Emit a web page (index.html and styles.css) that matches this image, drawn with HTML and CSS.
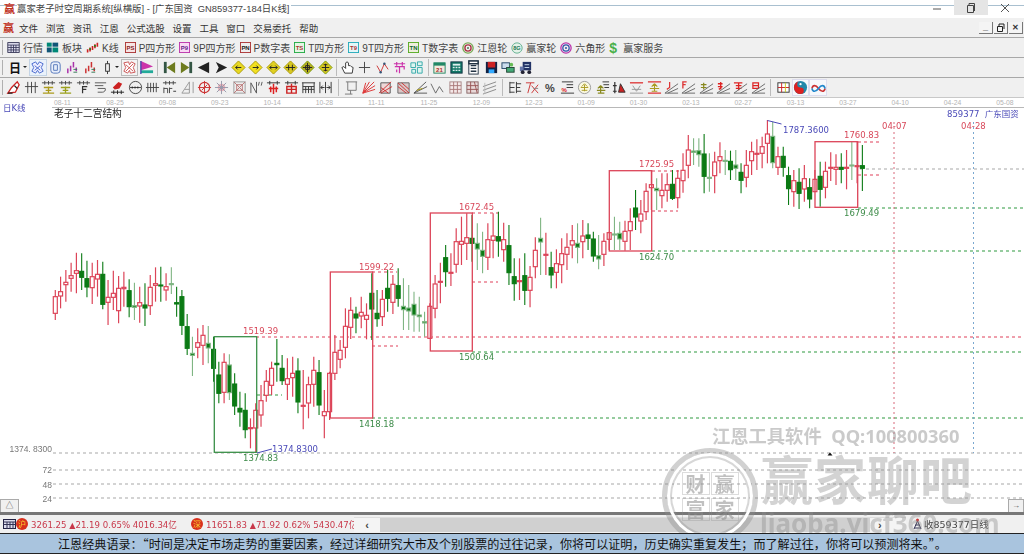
FILE: index.html
```html
<!DOCTYPE html>
<html lang="zh-CN">
<head>
  <meta charset="UTF-8">
  <title>赢家老子时空周期系统</title>
  <link rel="stylesheet" href="styles.css">
</head>
<body>
  <div class="app">
    <div class="titlebar">
      <span class="logo">赢</span>
      <span class="title-text">赢家老子时空周期系统[纵横版] - [广东国资&nbsp; GN859377-184日K线]</span>
      <div class="win-btns">
        <span class="win-btn"><svg width="10" height="10"><path d="M1 6h8" stroke="#555"/></svg></span>
        <span class="win-btn on"><svg width="10" height="12"><path d="M1.5 3.5h6v7h-6zM3 3V1.5h5.5V9" fill="none" stroke="#444"/></svg></span>
        <span class="win-btn"><svg width="10" height="10"><path d="M1 1l8 8M9 1l-8 8" stroke="#555"/></svg></span>
      </div>
    </div>

    <div class="menubar">
      <span class="logo">赢</span>
      <span class="menu">文件</span><span class="menu">浏览</span><span class="menu">资讯</span><span class="menu">江恩</span><span class="menu">公式选股</span><span class="menu">设置</span><span class="menu">工具</span><span class="menu">窗口</span><span class="menu">交易委托</span><span class="menu">帮助</span>
      <div class="mdi-btns">
        <span class="mdi-btn">_</span><span class="mdi-btn"><svg width="9" height="9"><path d="M1.5 3.5h5v5h-5zM3 3V1h5v5" fill="none" stroke="#222"/></svg></span><span class="mdi-btn close">✕</span>
      </div>
    </div>

    <div class="toolbar tb-main">
      <span class="tb-item"><svg class="ico" viewBox="0 0 16 14"><rect x="1" y="1" width="14" height="12" fill="#dde" stroke="#224"/><path d="M1 4h14M1 7h14M1 10h14M5 4v9M8 4v9M11 4v9" stroke="#335"/></svg>行情</span>
      <span class="tb-item"><svg class="ico" viewBox="0 0 16 14"><rect x="1" y="1" width="6" height="5" fill="#087"/><rect x="8" y="1" width="7" height="5" fill="#157"/><rect x="1" y="7" width="6" height="6" fill="#157"/><rect x="8" y="7" width="7" height="6" fill="#087"/></svg>板块</span>
      <span class="tb-item kline"><svg class="ico" viewBox="0 0 16 14"><path d="M2 9v4M5 7v5M8 5v5M11 3v5M14 1v5" stroke="#c22" stroke-width="2"/><path d="M5 8v2M11 4v2" stroke="#181" stroke-width="2"/></svg>K线</span>
      <span class="tb-item"><svg class="ico box-ico" viewBox="0 0 12 12"><rect x=".5" y=".5" width="11" height="11" fill="#f6e4e4" stroke="#a33"/><text x="6" y="8.5" class="ico-txt" fill="#822">PS</text></svg>P四方形</span>
      <span class="tb-item"><svg class="ico box-ico" viewBox="0 0 12 12"><rect x=".5" y=".5" width="11" height="11" fill="#f8d8f4" stroke="#b3a"/><text x="6" y="8.5" class="ico-txt" fill="#628">P9</text></svg>9P四方形</span>
      <span class="tb-item"><svg class="ico box-ico" viewBox="0 0 12 12"><rect x=".5" y=".5" width="11" height="11" fill="#eee" stroke="#a33"/><text x="6" y="8.5" class="ico-txt" fill="#222">PN</text></svg>P数字表</span>
      <span class="tb-item"><svg class="ico box-ico" viewBox="0 0 12 12"><rect x=".5" y=".5" width="11" height="11" fill="#e4f6e4" stroke="#2a4"/><text x="6" y="8.5" class="ico-txt" fill="#a33">TS</text></svg>T四方形</span>
      <span class="tb-item"><svg class="ico box-ico" viewBox="0 0 12 12"><rect x=".5" y=".5" width="11" height="11" fill="#e4f6f8" stroke="#2ab"/><text x="6" y="8.5" class="ico-txt" fill="#a33">T9</text></svg>9T四方形</span>
      <span class="tb-item"><svg class="ico box-ico" viewBox="0 0 12 12"><rect x=".5" y=".5" width="11" height="11" fill="#eed" stroke="#5a2"/><text x="6" y="8.5" class="ico-txt" fill="#163">TN</text></svg>T数字表</span>
      <span class="tb-item"><svg class="ico round" viewBox="0 0 14 14"><circle cx="7" cy="7" r="6" fill="none" stroke="#7a5" stroke-width="1.6"/><circle cx="7" cy="7" r="3.6" fill="none" stroke="#a34" stroke-width="1.6"/><circle cx="7" cy="7" r="1.2" fill="#575"/></svg>江恩轮</span>
      <span class="tb-item"><svg class="ico round" viewBox="0 0 14 14"><circle cx="7" cy="7" r="6" fill="#e4f2e8" stroke="#5a8"/><text x="7" y="9.5" class="ico-txt" fill="#275">8G</text></svg>赢家轮</span>
      <span class="tb-item"><svg class="ico round" viewBox="0 0 14 14"><circle cx="7" cy="7" r="6" fill="none" stroke="#b3a" stroke-width="1.5"/><circle cx="7" cy="7" r="3.7" fill="none" stroke="#35a" stroke-width="1.5"/><circle cx="7" cy="7" r="1.2" fill="#35a"/></svg>六角形</span>
      <span class="tb-item"><span class="dollar">$</span>赢家服务</span>
    </div>

    <div class="toolbar tb-icons">
      <span class="tool wide day-btn"><b class="day">日</b><i class="caret"></i></span>
      <span class="tool on"><svg viewBox="0 0 16 16"><path d="M2 4l4-2 2 3 2-3 4 2-2 4 2 4-4 2-2-3-2 3-4-2 2-4z" fill="#eef" stroke="#46c"/><path d="M5 6l6 5M11 6l-6 5" stroke="#46c"/></svg></span>
      <span class="tool"><svg viewBox="0 0 16 16"><rect x="3" y="2" width="10" height="12" rx="3" fill="#e8eefa" stroke="#57b"/><path d="M6 5h4v6H6z" fill="none" stroke="#57b"/></svg></span>
      <span class="tool"><svg viewBox="0 0 16 16"><path d="M3 9v5M6 6v6M9 2v6M12 8v4" stroke="#a3a" stroke-width="1.6"/><path d="M9 10h4M9 13h4" stroke="#375"/></svg></span>
      <span class="tool"><svg viewBox="0 0 16 16"><path d="M3 9v5M6 6v6M9 2v6M12 8v4" stroke="#c33" stroke-width="1.6"/><path d="M9 10h4M9 13h4" stroke="#375"/></svg></span>
      <span class="tool wide"><svg viewBox="0 0 16 16"><rect x="6" y="4" width="4" height="8" fill="none" stroke="#333"/><path d="M8 1v3M8 12v3" stroke="#333"/></svg><i class="caret"></i></span>
      <span class="tool on gray"><svg viewBox="0 0 16 16"><path d="M2 3l5-1 1 3 2-3 4 2-2 4 2 5-5 1-1-3-2 3-4-2 2-4z" fill="#fff" stroke="#c55"/><path d="M4 5l8 7M12 4l-8 8" stroke="#c55"/></svg></span>
      <span class="tool"><svg viewBox="0 0 16 16"><path d="M2 1l13 6-13 4z" fill="#c3a"/><path d="M2 11h13v3H2z" fill="#2a9"/><path d="M2 1v14" stroke="#44a" stroke-width="1.4"/></svg></span>
      <span class="sep"></span>
      <span class="tool"><svg viewBox="0 0 16 16"><path d="M2 2h3v12H2z" fill="#354"/><path d="M14 2v12L5 8z" fill="#6d7b1e"/></svg></span>
      <span class="tool"><svg viewBox="0 0 16 16"><path d="M11 2h3v12h-3z" fill="#354"/><path d="M2 2v12l9-6z" fill="#6d7b1e"/></svg></span>
      <span class="tool"><svg viewBox="0 0 16 16"><path d="M14 2v12L2 8z" fill="#222"/></svg></span>
      <span class="tool"><svg viewBox="0 0 16 16"><path d="M2 2l12 6-12 6 3-6z" fill="#222"/></svg></span>
      <span class="tool"><svg viewBox="0 0 16 16"><path d="M8 1l7 7-7 7-7-7z" fill="#e8d820" stroke="#a90"/><path d="M5 8h6M7 6L5 8l2 2" fill="none" stroke="#222"/></svg></span>
      <span class="tool"><svg viewBox="0 0 16 16"><path d="M8 1l7 7-7 7-7-7z" fill="#f2e020" stroke="#a90"/><path d="M5 8h6M9 6l2 2-2 2" fill="none" stroke="#222"/></svg></span>
      <span class="tool"><svg viewBox="0 0 16 16"><path d="M8 1l7 7-7 7-7-7z" fill="#e0d020" stroke="#a90"/><path d="M4 8h8M6 6L4 8l2 2M10 6l2 2-2 2" fill="none" stroke="#222"/></svg></span>
      <span class="tool"><svg viewBox="0 0 16 16"><path d="M8 1l7 7-7 7-7-7z" fill="#d8c820" stroke="#a90"/><path d="M3 8h10M6 5v6M10 5v6" fill="none" stroke="#222"/></svg></span>
      <span class="tool"><svg viewBox="0 0 16 16"><path d="M8 1l7 7-7 7-7-7z" fill="#b8b020" stroke="#790"/><path d="M3 8h10M8 3v10M6 6h4v4H6z" fill="none" stroke="#222"/></svg></span>
      <span class="tool"><svg viewBox="0 0 16 16"><path d="M8 1l7 7-7 7-7-7z" fill="#d8c820" stroke="#790"/><path d="M4 8h8M8 4v8M6 5h4M6 11h4" fill="none" stroke="#222"/></svg></span>
      <span class="sep"></span>
      <span class="tool"><svg viewBox="0 0 16 16"><path d="M5 14L2 8l2-1 2 2V3l1.5-1L9 3v3l2 0 1 1 2 1-1 6z" fill="#fff" stroke="#333"/></svg></span>
      <span class="tool"><svg viewBox="0 0 16 16"><path d="M8 2v12M2 8h12" stroke="#444"/></svg></span>
      <span class="tool"><svg viewBox="0 0 16 16"><path d="M2 6l4 7 4-9 4 6" fill="none" stroke="#c33"/><circle cx="6" cy="13" r="1.3" fill="#357"/><circle cx="10" cy="4" r="1.3" fill="#357"/></svg></span>
      <span class="tool"><svg viewBox="0 0 16 16"><path d="M2 4h12M5 2v4M11 2v4M3 7h10v3M8 7v7M5 10v3" fill="none" stroke="#c3a" stroke-width="1.3"/></svg></span>
      <span class="tool"><svg viewBox="0 0 16 16"><path d="M2 3h5v5H2zM9 2h5v4H9zM3 10h4v4H3zM9 8h5v6H9z" fill="#dff4f0" stroke="#3aa"/></svg></span>
      <span class="sep"></span>
      <span class="tool"><svg viewBox="0 0 16 16"><rect x="2" y="3" width="12" height="11" fill="#f4e8dc" stroke="#286"/><path d="M2 3h12v3H2z" fill="#286"/><text x="8" y="13" class="ico-txt" fill="#a33">21</text></svg></span>
      <span class="tool"><svg viewBox="0 0 16 16"><rect x="2" y="2" width="12" height="12" fill="#176" stroke="#134"/><path d="M4 4h8v2H4z" fill="#dee"/><path d="M4 8h2M7 8h2M10 8h2M4 11h2M7 11h2M10 11h2" stroke="#dee" stroke-width="1.4"/></svg></span>
      <span class="tool"><svg viewBox="0 0 16 16"><rect x="3" y="1" width="10" height="14" fill="#fff" stroke="#234"/><path d="M3 1h10v3H3zM5 6h6M5 9h6M5 12h6" fill="none" stroke="#234" stroke-width="1.4"/></svg></span>
      <span class="tool"><svg viewBox="0 0 16 16"><rect x="2" y="2" width="12" height="12" fill="#124"/><path d="M4 2h8v6H4z" fill="#c22"/><path d="M5 10h6v4H5z" fill="#3af"/></svg></span>
      <span class="tool"><svg viewBox="0 0 16 16"><rect x="1" y="3" width="8" height="6" fill="#cde" stroke="#246"/><rect x="6" y="8" width="8" height="5" fill="#4a7" stroke="#243"/><circle cx="11" cy="5" r="2" fill="#6b5"/></svg></span>
      <span class="tool"><svg viewBox="0 0 16 16"><path d="M5 2h9v9H5z" fill="#236"/><path d="M2 7h4v5H2z" fill="#67a"/><circle cx="5" cy="13" r="2" fill="#223"/><circle cx="12" cy="13" r="2" fill="#223"/><path d="M7 5h5M7 8h5" stroke="#cde"/></svg></span>
    </div>

    <div class="toolbar tb-icons">
      <span class="tool"><svg viewBox="0 0 16 16"><path d="M2 14l4-6 6-6 2 3-4 8z" fill="#fff" stroke="#c22" stroke-width="1.4"/><path d="M2 14h5M9 6l3 3" stroke="#222" stroke-width="1.4"/></svg></span>
      <span class="tool"><svg viewBox="0 0 16 16"><path d="M4 2v12M8 2v12M12 2v12M1 7h14" stroke="#444"/></svg></span>
      <span class="tool"><svg viewBox="0 0 16 16"><path d="M1 3h14M4 1v4M8 1v4M12 1v4" stroke="#444"/><path d="M3 8h10M5 11h6M2 14h12M8 7v7" stroke="#ab9a1c" stroke-width="1.4"/></svg></span>
      <span class="tool"><svg viewBox="0 0 16 16"><path d="M1 3h14M4 1v4M8 1v4M12 1v4" stroke="#444"/><path d="M3 8h10M5 11h6M2 14h12M8 7v7" stroke="#9aa01c" stroke-width="1.4"/></svg></span>
      <span class="tool"><svg viewBox="0 0 16 16"><path d="M1 3h14M4 1v4M8 1v4M12 1v4" stroke="#444"/><path d="M7 14V7h5M7 10h4" fill="none" stroke="#333" stroke-width="1.3"/></svg></span>
      <span class="tool"><svg viewBox="0 0 16 16"><path d="M2 3h12M2 6h9M5 9h8c1 2-1 4-3 4H5" fill="none" stroke="#555"/></svg></span>
      <span class="tool"><svg viewBox="0 0 16 16"><path d="M5 10L3 8l6-6 4 2-3 5z" fill="#c22"/><path d="M1 13h14M4 11v4M8 11v4M12 11v4" stroke="#222"/></svg></span>
      <span class="tool"><svg viewBox="0 0 16 16"><circle cx="8" cy="8" r="6.5" fill="none" stroke="#444"/><path d="M2 8h12" stroke="#444"/><path d="M4 8h1M7 8h1M10 8h1" stroke="#222" stroke-width="2"/></svg></span>
      <span class="tool"><svg viewBox="0 0 16 16"><path d="M3 3v10M6 3v10M9 3v10M12 3v10M1 8h14" stroke="#444"/></svg></span>
      <span class="tool"><svg viewBox="0 0 16 16"><path d="M1 3h14M4 1v4M8 1v4M12 1v4M2 8v6M2 9h4v5M8 8v6M8 9h3" fill="none" stroke="#444"/><path d="M12 12h3" stroke="#333"/></svg></span>
      <span class="tool"><svg viewBox="0 0 16 16"><path d="M2 14L10 2v12zM5 10h5M14 2v12" fill="none" stroke="#999"/></svg></span>
      <span class="tool"><svg viewBox="0 0 16 16"><circle cx="8" cy="8" r="5.5" fill="none" stroke="#c33" stroke-width="1.3"/><path d="M1 8h14M8 1v14M5 11l6-6" stroke="#c33"/></svg></span>
      <span class="tool"><svg viewBox="0 0 16 16"><circle cx="8" cy="8" r="4" fill="#e8b0b8"/><path d="M1 8h14M8 1v14M3 3l10 10M13 3L3 13" stroke="#99a"/></svg></span>
      <span class="tool"><svg viewBox="0 0 16 16"><rect x="2" y="2" width="12" height="12" fill="#eee" stroke="#999"/><path d="M2 2l12 12M14 2L2 14M5 5h6v6H5z" fill="none" stroke="#b77"/></svg></span>
      <span class="tool"><svg viewBox="0 0 16 16"><path d="M2 14V3l6 11V2M11 2l-1 4M14 2l-1 4" fill="none" stroke="#555"/></svg></span>
      <span class="tool"><svg viewBox="0 0 16 16"><path d="M1 3h14M4 1v4M12 1v4" stroke="#333"/><path d="M8 4v11M3 9h10M5 7v6M11 7v6" stroke="#d22" stroke-width="1.6"/></svg></span>
      <span class="tool"><svg viewBox="0 0 16 16"><path d="M1 3h14M4 1v4M12 1v4" stroke="#333"/><path d="M3 7h10v7H3zM3 10h10M8 4v10" fill="none" stroke="#c22" stroke-width="1.5"/></svg></span>
      <span class="tool"><svg viewBox="0 0 16 16"><path d="M1 3h14M2 3v11M14 3v11M2 7h12M2 10h12M5 7v7M8 7v7M11 7v7" stroke="#333"/></svg></span>
      <span class="tool"><svg viewBox="0 0 16 16"><path d="M2 2v12M14 2v12M8 2v12M3 8h4M9 8h4M5 6L3 8l2 2M11 6l2 2-2 2" fill="none" stroke="#333"/></svg></span>
      <span class="sep wide"></span>
      <span class="tool"><svg viewBox="0 0 16 16"><path d="M2 2h12M4 2v9h9V2M7 11v4M1 15h8" fill="none" stroke="#777"/></svg></span>
      <span class="tool"><svg viewBox="0 0 16 16"><path d="M2 14L14 2M2 14L15 6M2 14L15 10M2 14L9 2M2 14L5 3" stroke="#d33"/></svg></span>
      <span class="tool"><svg viewBox="0 0 16 16"><path d="M3 3h10v11H3z" fill="#eed8d8" stroke="#555"/><path d="M1 14L14 2M3 14L15 7M3 8l8 6" stroke="#c33"/></svg></span>
      <span class="tool"><svg viewBox="0 0 16 16"><path d="M2 3h12v11H2z" fill="#d8c8c8" stroke="#666"/><path d="M2 3l12 11M2 7l9 7M6 3l8 7" stroke="#c33"/></svg></span>
      <span class="tool"><svg viewBox="0 0 16 16"><path d="M1 14L14 2M1 14L15 7M1 14h14" stroke="#555"/><path d="M4 11l6-2" stroke="#a90"/></svg></span>
      <span class="tool"><svg viewBox="0 0 16 16"><path d="M1 4l5 10 4-7 4 6" fill="none" stroke="#666"/></svg></span>
      <span class="tool"><svg viewBox="0 0 16 16"><rect x="2" y="2" width="12" height="12" fill="#f4e8e8" stroke="#a88"/><path d="M2 6h12M2 10h12M6 2v12M10 2v12" stroke="#a77"/></svg></span>
      <span class="tool"><svg viewBox="0 0 16 16"><rect x="2" y="2" width="12" height="12" fill="#e8d8d8" stroke="#866"/><path d="M2 6h12M2 10h12M6 2v12M10 2l3 12" stroke="#955"/></svg></span>
      <span class="tool"><svg viewBox="0 0 16 16"><path d="M1 7L15 2M1 11L15 6M1 15L15 10" stroke="#888"/><path d="M3 3v12" stroke="#bbb"/></svg></span>
      <span class="sep wide"></span>
      <span class="tool"><svg viewBox="0 0 16 16"><path d="M2 2v12M2 3h5M2 8h5M2 13h5M9 2v12M9 4h5M9 8h4M9 12h5" stroke="#333"/></svg></span>
      <span class="tool"><svg viewBox="0 0 16 16"><path d="M1 3h9M6 3L3 14M7 6l7 8M14 5l-7 9" fill="none" stroke="#c33"/><path d="M9 9h5" stroke="#888"/></svg></span>
      <span class="tool"><b class="pct">%</b></span>
      <span class="tool"><svg viewBox="0 0 16 16"><path d="M2 2h12M7 5h7M7 8h7M1 14h14" stroke="#333"/><text x="4.5" y="12.5" class="ico-txt" fill="#d22">%</text></svg></span>
      <span class="tool"><svg viewBox="0 0 16 16"><circle cx="8" cy="8" r="6.5" fill="#faf8e0" stroke="#999"/><path d="M4 8h8M5 11h6M8 5v7M8 4L5 7M8 4l3 3" stroke="#aa9a20"/></svg></span>
      <span class="tool"><svg viewBox="0 0 16 16"><path d="M8 2h7M9 5h6M10 8h5" stroke="#333"/><path d="M2 11h9M3 14h7M6 7v7M6 6L3 9M6 6l3 3" fill="none" stroke="#8a8a20" stroke-width="1.3"/></svg></span>
      <span class="tool"><svg viewBox="0 0 16 16"><path d="M3 2v12M1 6h4M1 12h4" stroke="#333" stroke-width="1.3"/><path d="M7 13l2-9 5 9z" fill="#c22" stroke="#333"/></svg></span>
      <span class="tool"><svg viewBox="0 0 16 16"><path d="M1 3h14" stroke="#d33" stroke-width="1.4"/><path d="M4 6l4 6 4-6M3 10h10M1 14h14" fill="none" stroke="#999"/></svg></span>
      <span class="tool"><svg viewBox="0 0 16 16"><path d="M1 2h14M1 14h14" stroke="#d33" stroke-width="1.4"/><path d="M3 9h10M5 12h6M8 5v7M8 4L5 7M8 4l3 3" fill="none" stroke="#aa9a20" stroke-width="1.2"/></svg></span>
      <span class="tool"><svg viewBox="0 0 16 16"><path d="M6 2v6l-3 2" fill="none" stroke="#d33" stroke-width="1.3"/><path d="M1 14L15 4M1 14h14M4 14L15 9" stroke="#666"/></svg></span>
      <span class="tool"><svg viewBox="0 0 16 16"><path d="M2 9V2h4M2 5h3" fill="none" stroke="#d33" stroke-width="1.4"/><path d="M1 14L15 4M1 14h14M4 14L15 9" stroke="#666"/></svg></span>
      <span class="tool"><svg viewBox="0 0 16 16"><path d="M2 5h6M2 8h6M5 3v7" stroke="#8a8a20" stroke-width="1.3"/><path d="M1 14L15 4M1 14h14M4 14L15 9" stroke="#666"/></svg></span>
      <span class="tool"><svg viewBox="0 0 16 16"><path d="M2 4h5M2 7h5M5 2v8M3 10l3-2" stroke="#d22" stroke-width="1.4"/><path d="M1 14L15 4M1 14h14M4 14L15 9" stroke="#666"/></svg></span>
      <span class="tool"><svg viewBox="0 0 16 16"><path d="M1 3h9M3 6h6M3 9h6M6 3v8" stroke="#d22" stroke-width="1.4"/><path d="M1 14L15 4M1 14h14M8 14l7-4" stroke="#666"/></svg></span>
      <span class="tool"><svg viewBox="0 0 16 16"><path d="M2 3h6v6H2zM2 6h6" fill="none" stroke="#d22" stroke-width="1.3"/><path d="M1 14L15 4M1 14h14M4 14L15 9" stroke="#666"/></svg></span>
      <span class="sep wide"></span>
      <span class="tool"><svg viewBox="0 0 16 16"><rect x="2" y="3" width="12" height="10" fill="#fff" stroke="#333"/><path d="M2 8h12" stroke="#c22"/><path d="M6 3v10" stroke="#c22"/><path d="M10 3v10" stroke="#cc2"/></svg></span>
      <span class="tool on flat"><svg viewBox="0 0 16 16"><circle cx="8" cy="8" r="7" fill="#28a"/><path d="M8 1a7 7 0 0 0 0 14 3.5 3.5 0 0 0 0-7 3.5 3.5 0 0 1 0-7z" fill="#d22"/><circle cx="8" cy="4.5" r="1.2" fill="#fff"/></svg></span>
      <span class="tool on flat"><svg viewBox="0 0 16 16"><path d="M1 9c1-4 4-4 7 0s6 4 7 0" fill="none" stroke="#c33" stroke-width="1.8"/><path d="M1 9c1 4 4 4 7 0s6-4 7 0" fill="none" stroke="#28c" stroke-width="1.8"/></svg></span>
    </div>

    <div class="date-axis">
      <span>08-11</span><span>08-25</span><span>09-08</span><span>09-23</span><span>10-14</span><span>10-28</span><span>11-11</span><span>11-25</span><span>12-09</span><span>12-23</span><span>01-09</span><span>01-30</span><span>02-13</span><span>02-27</span><span>03-13</span><span>03-27</span><span>04-10</span><span>04-24</span><span>05-08</span>
    </div>

    <div class="chart">
      <svg class="plot" viewBox="0 108 1024 404" preserveAspectRatio="none">
        <g class="dash gray">
          <path d="M860 169H1024M53 453H1024M53 470H1024M53 484H1024M53 498H1024"/>
        </g>
        <g class="dash red">
          <path d="M256 337H1024M372 272H397M372 346H398M472 213H498M472 282H498M652 171H679M652 211H678M858 142H882M858 175H882"/>
        </g>
        <g class="dash green">
          <path d="M257 395H282M472 352H1024M652 251H1024M858 208H1024M372 418H1024"/>
        </g>
        <path class="dot red" d="M894 122V453"/>
        <path class="dot blue" d="M973.500 122V453"/>

        <g id="candles"></g>

        <rect class="box green" x="214.300" y="336.700" width="42.400" height="115.600"/>
        <rect class="box red" x="330.300" y="272" width="42.400" height="146"/>
        <rect class="box red" x="430.300" y="213" width="42" height="138"/>
        <rect class="box red" x="609.300" y="170.700" width="42.400" height="80.300"/>
        <rect class="box red" x="815" y="141.700" width="42.700" height="65.600"/>
        <path class="leader" d="M257 453l15-4M767.500 120.500l14 3.500"/>

        <g class="price red">
          <text x="243" y="334">1519.39</text>
          <text x="359" y="270">1599.22</text>
          <text x="459" y="210">1672.45</text>
          <text x="639" y="167">1725.95</text>
          <text x="844" y="138">1760.83</text>
          <text x="882" y="129">04-07</text>
          <text x="961" y="129">04-28</text>
        </g>
        <g class="price green">
          <text x="243" y="461">1374.83</text>
          <text x="359" y="427">1418.18</text>
          <text x="459" y="360">1500.64</text>
          <text x="639" y="260">1624.70</text>
          <text x="844" y="216">1679.49</text>
        </g>
        <g class="price blue">
          <text x="272" y="452">1374.8300</text>
          <text x="783" y="133">1787.3600</text>
          <text x="947" y="116.500">859377&nbsp; 广东国资</text>
          <text x="3" y="111">日K线</text>
        </g>
        <text class="heading" x="54" y="117">老子十二宫结构</text>
        <g class="scale">
          <text x="52" y="452">1374. 8300</text>
          <text x="52" y="473">72</text>
          <text x="52" y="487.500">48</text>
          <text x="52" y="502">24</text>
        </g>
        <path d="M827.500 455.500l2.500-3 2.500 3z" fill="#111"/>
      </svg>
      <span class="tab tab-left">△</span>
      <span class="tab tab-right">→</span>
    </div>

    <div class="statusbar">
      <svg class="stat-ico" viewBox="0 0 13 10"><rect x=".5" y=".5" width="12" height="9" fill="#dde" stroke="#224"/><path d="M.5 3h12M.5 5.500h12M4 3v7M7 3v7M10 3v7" stroke="#335"/></svg>
      <span class="idx">
        <span class="badge">沪</span><span class="quote">3261.25 <em>▲</em>21.19 0.65% 4016.34亿</span>
      </span>
      <span class="idx">
        <span class="badge">深</span><span class="quote">11651.83 <em>▲</em>71.92 0.62% 5430.47亿</span>
      </span>
      <div class="scrollbar">
        <span class="arrow">‹</span>
        <span class="thumb"></span>
        <span class="arrow right">›</span>
      </div>
      <div class="stat-right">
        <svg width="9" height="12" viewBox="0 0 9 12"><path d="M1 11L4.500 3 8 11M2.500 7h4M1.500 10h6" fill="none" stroke="#335"/><circle cx="4.500" cy="2" r="1.500" fill="#c33"/></svg>
        <span>收859377日线</span>
      </div>
    </div>

    <div class="watermark">
      <div class="wm-qq">江恩工具软件&nbsp; QQ:100800360</div>
      <div class="wm-seal">
        <div class="wm-seal-grid"><span>财</span><span>赢</span><span>富</span><span>家</span></div>
      </div>
      <div class="wm-name">赢家聊吧</div>
      <div class="wm-url">liaoba.yicf360.com</div>
    </div>

    <div class="ticker">江恩经典语录：“时间是决定市场走势的重要因素，经过详细研究大市及个别股票的过往记录，你将可以证明，历史确实重复发生；而了解过往，你将可以预测将来。”。</div>
  </div>
  <script src="chart.js"></script>
</body>
</html>
```

FILE: styles.css
```css
* { box-sizing: border-box; }
html, body { margin: 0; height: 100%; overflow: hidden; }
body { font-family: "Liberation Sans", "Noto Sans CJK SC", sans-serif; color: #222; background: #fff; }
.app { position: relative; width: 1024px; height: 554px; display: flex; flex-direction: column; overflow: hidden; filter: blur(.3px); }
.app > * { flex: none; }

.logo { color: #c0301c; font-weight: 700; font-size: 11px; line-height: 12px; }

.titlebar { height: 18px; display: flex; align-items: flex-start; padding: 3px 0 0 4px; gap: 2px; background: linear-gradient(#fff 5px, #a9c0d0 5px, #a9c0d0 6px, #fff 6px); position: relative; font-size: 9.400px; color: #444; }
.title-text { background: #fff; padding-right: 2px; line-height: 12px; }
.win-btns { margin: -3px 2px 0 auto; display: flex; }
.win-btn { width: 34px; height: 15px; display: flex; align-items: center; justify-content: center; }
.win-btn.on { background: #e5e5e5; }

.menubar { height: 19px; background: #f0f0f0; display: flex; align-items: center; padding-left: 3px; font-size: 9.500px; color: #333; }
.menubar .logo { margin-right: 5px; }
.menu { margin-right: 7.900px; }
.mdi-btns { margin-left: auto; display: flex; gap: 1px; padding-right: 1px; }
.mdi-btn { width: 14px; height: 12px; background: #f4f4f4; border-right: 1px solid #777; border-bottom: 1px solid #777; font-size: 9px; line-height: 9px; text-align: center; font-weight: 700; display: flex; align-items: center; justify-content: center; }
.mdi-btn.close { font-size: 8px; }

.toolbar { height: 20px; background: #f0f0f0; border-top: 1px solid #a8a8a8; display: flex; align-items: center; padding-left: 2px; }
.toolbar::before { content: ""; width: 1px; height: 15px; background: #b0b0b0; flex: none; margin-right: 2px; }
.tb-main { font-size: 10px; color: #444; gap: 4px; }
.tb-main::before { margin-right: 0; }
.tb-item { display: flex; align-items: center; gap: 3px; white-space: nowrap; }
.tb-item:first-child { margin-right: -1px; }
.tb-item.kline { margin-right: 2px; }
.ico { width: 13px; height: 13px; flex: none; }
.ico.round { width: 12px; height: 12px; }
.box-ico { width: 11px; height: 11px; }
.ico-txt { font: 700 6.500px "Liberation Sans", sans-serif; text-anchor: middle; }
.dollar { color: #4ab04a; font: 700 14px "Liberation Sans", sans-serif; line-height: 14px; margin-right: 1px; width: 10px; }

.tool { width: 17.350px; height: 17px; flex: none; display: flex; align-items: center; justify-content: center; border: 1px solid transparent; }
.tool svg { width: 15px; height: 15px; flex: none; }
.tool.wide { width: 22px; position: relative; justify-content: flex-start; }
.tool.day-btn { width: 24.300px; padding-left: 3px; }
.tool.on { background: #eaf2fb; border-color: #c4d4e6; }
.tool.on.gray { background: #f4f4f4; border-color: #bbb; }
.tool.on.flat { background: #f6f8fb; border-color: #dde; }
.day { font-size: 12px; color: #111; }
.caret { position: absolute; right: 1px; top: 6px; border: 2.500px solid transparent; border-top-color: #222; border-bottom: 0; }
.sep { width: 1px; height: 17px; background: #bbb; margin: 0 2px; flex: none; }
.sep.wide { margin: 0 3.500px; }
.pct { font: 700 11px "Liberation Sans", sans-serif; color: #444; }

.date-axis { height: 11px; background: #fff linear-gradient(#b8b8b8, #b8b8b8) 52px 100% / 100% 1px no-repeat; border-top: 1px solid #c8c8c8; display: flex; padding-left: 54px; font: 6.800px/9px "Liberation Sans", sans-serif; color: #b4b4b4; }
.date-axis span { width: 52.350px; flex: none; }

.chart { position: relative; height: 407px; background: #fff; border-bottom: 3px solid #777; }
.plot { display: block; width: 1024px; height: 404px; overflow: visible; }
.dash path { fill: none; stroke-width: 1.200; stroke-dasharray: 3 3; }
.dash.gray path { stroke: #a8a8a8; }
.dash.red path { stroke: #e0405a; }
.dash.green path { stroke: #2f9a40; }
.dot { fill: none; stroke-dasharray: 2 3; }
.dot.red { stroke: #d8687a; }
.dot.blue { stroke: #7aa8d0; }
.box { fill: none; stroke-width: 1.300; }
.box.red { stroke: #dc4458; }
.box.green { stroke: #3a8f48; }
.leader { fill: none; stroke: #4a4ab8; }
.price text { font: 8.500px "DejaVu Sans", "Noto Sans CJK SC", sans-serif; }
.price.red text { fill: #d8485a; }
.price.green text { fill: #3c8a48; }
.price.blue text { fill: #4a4ab8; }
.heading { font: 9.700px "Noto Sans CJK SC", sans-serif; fill: #222; }
.scale text { font: 8.500px "Liberation Sans", sans-serif; fill: #777; text-anchor: end; }
.c-red { stroke: #dc4458; stroke-width: 1.200; fill: #fff; }
.c-green { stroke: #0b7a14; stroke-width: 1.100; fill: #0b7a14; }
.c-pale { stroke: #7fb583; stroke-width: 1.100; fill: #0b7a14; }

.tab { position: absolute; bottom: 0; background: #f0f0f0; border: 1px solid #aaa; border-bottom: 0; font-size: 8px; text-align: center; color: #555; height: 13px; line-height: 12px; }
.tab-left { left: 0; width: 19px; }
.tab-right { right: 0; width: 16px; }

.statusbar { height: 19px; background: #f0f0f0; display: flex; align-items: center; padding-left: 3px; font: 8.600px "DejaVu Sans", "Noto Sans CJK SC", sans-serif; color: #c8384a; white-space: nowrap; border-bottom: 1px solid #222; }
.stat-ico { width: 13px; height: 10px; flex: none; }
.idx { display: flex; align-items: center; gap: 3px; flex: none; overflow: hidden; }
.stat-ico + .idx { width: 175px; }
.idx + .idx { width: 163px; }
.quote em { font-style: normal; font-size: 8px; }
.badge { width: 12px; height: 12px; border-radius: 50%; background: #d8301c; color: #f8d030; font: 8px/12px "Noto Sans CJK SC", sans-serif; text-align: center; flex: none; }
.scrollbar { width: 552px; height: 15px; flex: none; display: flex; align-items: center; background: #f4f4f4; border-top: 1px solid #ddd; color: #444; font: 700 11px "Liberation Sans", sans-serif; }
.arrow { width: 26px; text-align: center; flex: none; line-height: 12px; }
.arrow.right { width: 36px; text-align: left; padding-left: 8px; }
.thumb { flex: 1; height: 100%; background: #d0d0d0; }
.stat-right { flex: 1; display: flex; align-items: center; gap: 2px; padding-left: 7px; color: #444; font-size: 9.500px; }

.watermark { position: absolute; left: 0; top: 0; width: 1024px; height: 533px; overflow: hidden; pointer-events: none; }
.wm-qq { position: absolute; left: 712px; top: 425px; font-size: 18.300px; line-height: 22px; font-weight: 700; font-family: "Noto Sans", "Noto Sans CJK SC", sans-serif; color: rgba(150,150,150,.5); white-space: nowrap; }
.wm-seal { position: absolute; left: 662px; top: 448px; width: 96px; height: 96px; border-radius: 50%; border: 5px solid rgba(140,140,140,.4); box-shadow: inset 0 0 0 3px #fff, inset 0 0 0 5px rgba(140,140,140,.35); display: flex; align-items: center; justify-content: center; }
.wm-seal-grid { display: grid; grid-template-columns: 28px 28px; grid-auto-rows: 23px; gap: 3px 1px; font: 700 20px/22px "Noto Sans CJK SC", sans-serif; text-align: center; color: rgba(140,140,140,.55); }
.wm-seal-grid span { border: 1px solid rgba(140,140,140,.3); }
.wm-name { position: absolute; left: 761px; top: 448px; font-family: "Noto Sans CJK SC", sans-serif; font-size: 52px; line-height: 60px; font-weight: 700; letter-spacing: 1px; color: rgba(150,150,150,.42); white-space: nowrap; }
.wm-url { position: absolute; left: 760px; top: 508px; font: 700 26px/30px "Noto Sans", sans-serif; color: rgba(140,140,140,.4); white-space: nowrap; }

.ticker { position: relative; height: 20px; background: #a9c4de; border-bottom: 1px solid #222; font: 12.100px/19px "Noto Sans CJK SC", sans-serif; color: #111; padding-left: 58px; white-space: nowrap; overflow: hidden; }
```

FILE: chart.js
```js
// candle rows read off the picture: [high, body top, body bottom, low, kind]
// values are 3x offsets from y0, index 0 sits at x=55.3, step 5.275
const groups = [
  { y0: 240, rows: [
    [150,170,220,240,'r'],[110,155,168,205,'r'],[90,127,134,185,'r'],[68,107,115,155,'r'],[38,92,100,160,'r'],
    [40,94,112,150,'g'],[62,116,141,172,'g'],[68,110,143,192,'r'],[60,103,117,170,'r'],[65,103,193,208,'g'],
    [120,172,187,255,'r'],[92,160,172,210,'r'],[108,145,212,250,'r'],[95,142,146,200,'r'],[118,152,200,232,'g'],
    [128,197,202,240,'l'],[140,188,198,248,'r'],[130,195,204,258,'g'],[105,142,197,225,'r'],[82,131,136,185,'r'],
    [80,135,138,185,'g'],[100,140,150,182,'r'],[82,131,133,162,'l'],[140,188,192,230,'g'],[150,170,256,285,'g'],
    [222,260,325,345,'g'],[290,340,346,408,'l'],[265,308,322,355,'r'],[255,286,316,375,'r'],[258,310,324,370,'l'],
    [290,328,385,425,'g'],[365,405,460,490,'g'],[340,367,457,490,'r'],[343,375,458,480,'l'],[400,432,498,525,'g'],
    [455,505,516,560,'g'],[460,511,569,595,'g'],[535,563,566,625,'r'],[490,511,564,638,'r'],[435,482,525,560,'r'],
    [390,424,466,485,'r'],[365,385,436,465,'r'],[297,370,374,425,'g'],[345,385,422,435,'g'],[355,416,433,480,'r'],
    [350,400,413,470,'r'],[355,393,486,520,'g'],[390,496,499,568,'r'],[410,434,489,535,'r'],[350,391,433,500,'r'],
    [360,398,495,525,'g'],[450,515,527,595,'r'],[395,400,515,540,'r'],[285,337,400,420,'r'],[300,331,358,385,'r'],
    [205,259,322,355,'r'],[172,211,262,297,'r'],[200,222,234,280,'g'],[170,217,228,265,'r'],[190,226,238,298,'r'],
    [100,160,207,300,'g'],[150,220,236,260,'g']
  ]},
  { y0: 190, rows: [
    [300,328,380,408,'r'],[240,295,325,365,'g'],[255,283,337,372,'r'],[235,287,325,350,'g'],[265,349,359,420,'l'],
    [285,354,363,420,'l'],[305,343,375,425,'l'],[320,375,380,425,'l'],[365,395,399,440,'l'],[340,349,445,445,'r'],
    [255,282,355,385,'r'],[218,274,277,340,'r'],[165,203,245,290,'g'],[190,247,248,288,'r'],[115,155,223,248,'r'],
    [80,154,163,225,'r'],[70,143,160,210,'r'],[75,145,160,215,'g'],[100,160,177,240,'l'],[125,181,199,250,'l'],
    [100,149,202,240,'r'],[70,138,151,205,'r'],[65,140,153,200,'g'],[98,149,179,215,'r'],[105,167,248,285,'g'],
    [205,260,281,332,'g'],[205,272,275,330,'r'],[190,257,301,345,'g'],[228,262,301,352,'r'],[142,181,230,265,'r'],
    [83,145,156,255,'l'],[128,193,195,255,'r'],[185,233,255,295,'g'],[178,221,247,295,'r'],[145,191,224,280,'r'],
    [130,172,193,240,'r'],[105,152,165,205,'r'],[100,160,172,220,'l'],[90,138,155,205,'r'],[100,135,145,180,'g'],
    [125,147,198,215,'g'],[135,197,207,238,'l'],[130,154,193,228,'r'],[125,128,148,180,'r'],[80,132,135,180,'l'],
    [95,130,147,180,'l'],[92,124,154,182,'r'],[55,95,122,180,'r'],[0,54,81,120,'g'],[30,72,93,130,'r'],
    [-20,4,65,90,'r']
  ]},
  { y0: 110, rows: [
    [180,224,233,300,'r'],[205,235,242,300,'l'],[190,241,257,295,'r'],[190,224,241,275,'r'],
    [180,223,265,270,'g'],[180,205,263,295,'r'],[130,181,212,248,'r'],[75,120,166,205,'r'],[85,123,127,165,'l'],
    [85,122,134,170,'l'],[72,132,199,250,'g'],[130,202,204,245,'l'],[125,156,197,250,'r'],[97,140,152,190,'r'],
    [120,151,154,195,'l'],[122,154,179,210,'g'],[120,165,175,210,'l'],[160,187,211,250,'g'],[120,166,202,232,'r'],
    [95,125,152,195,'r'],[88,130,132,180,'r'],[80,110,130,175,'r'],[30,72,100,160,'r'],[35,79,158,175,'l'],
    [110,140,172,195,'r'],[110,139,172,200,'g'],[170,197,236,285,'g'],[180,212,245,290,'r'],[175,217,250,297,'g'],
    [165,206,237,275,'r'],[205,233,267,295,'g'],[180,208,245,245,'r'],[155,199,238,290,'g'],[155,184,232,265,'r'],
    [127,172,174,213,'r'],[133,172,178,225,'r'],[130,172,178,220,'g'],[120,172,174,238,'r'],[95,165,168,210,'l'],
    [95,167,170,220,'r'],[105,167,175,243,'g']
  ]}
];

const SVG = 'http://www.w3.org/2000/svg';
const holder = document.getElementById('candles');
const kinds = { r: 'c-red', g: 'c-green', l: 'c-pale' };

function add(name, attrs) {
  const el = document.createElementNS(SVG, name);
  for (const k in attrs) el.setAttribute(k, attrs[k]);
  holder.appendChild(el);
}

let i = 0;
groups.forEach(g => {
  g.rows.forEach(([hi, top, bot, lo, kind]) => {
    const x = 55.3 + i * 5.275;
    const y = v => g.y0 + v / 3;
    add('line', { class: kinds[kind], x1: x, x2: x, y1: y(hi), y2: y(lo) });
    add('rect', { class: kinds[kind], x: x - 2, y: y(top), width: 4, height: Math.max(y(bot) - y(top), 1) });
    i++;
  });
});
```
